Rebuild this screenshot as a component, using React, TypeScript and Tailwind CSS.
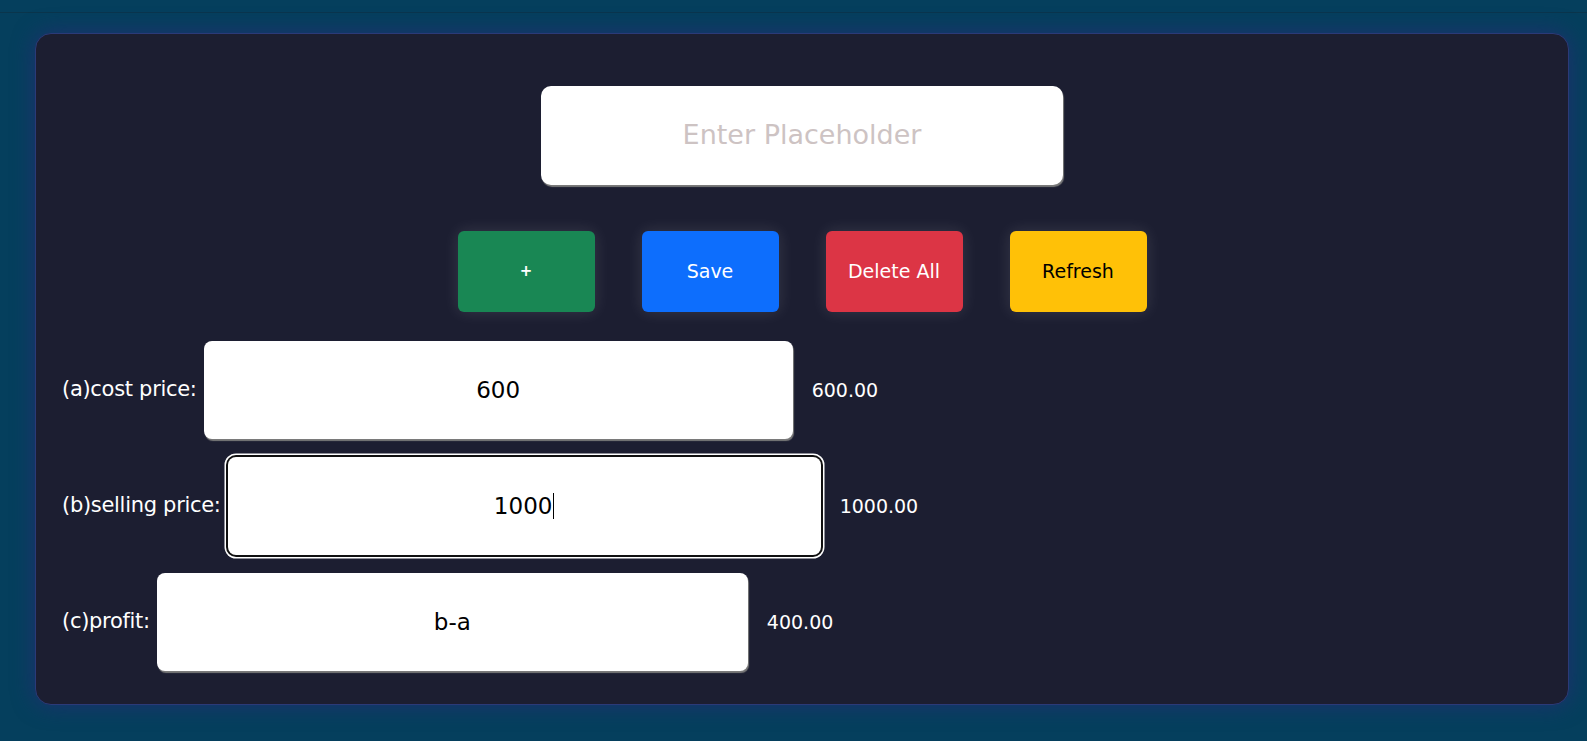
import React from "react";

const font = { fontFamily: "'DejaVu Sans', 'Open Sans', sans-serif" };

function Row({ label, value, result, focused, w }: { label: string; value: string; result: string; focused?: boolean; w: string }) {
  return (
    <div className="flex items-center">
      <span className="text-[21px] text-white whitespace-nowrap mr-[7px] tracking-[-0.3px]">{label}</span>
      <div
        className={
          "h-[98px] bg-white rounded-[8px] flex items-center justify-center text-[23px] text-black " +
          w +
          (focused
            ? " shadow-[0_0_0_2px_#101010,0_0_0_3.5px_#ffffff]"
            : " shadow-[1px_2px_1px_#7a7a7a]")
        }
      >
        <span>{value}</span>
        {focused && <span className="inline-block w-[1px] h-[26px] bg-black ml-[1px]" />}
      </div>
      <span className="text-[19px] text-white ml-[19px]">{result}</span>
    </div>
  );
}

export default function App() {
  return (
    <div className="min-h-screen w-full bg-[#053f5d] overflow-hidden" style={font}>
      <div className="h-[13px] border-b border-[#0a354c]" />
      <div className="ml-[35px] mr-[18px] mt-[20px] bg-[#1c1e31] rounded-[16px] border border-[#2b3a78] shadow-[0_0_22px_#203070] pt-[52px] pb-[33px] px-[26px]">
        <div className="flex justify-center">
          <div className="w-[522px] h-[99px] bg-white rounded-[10px] shadow-[1px_2px_1px_#7a7a7a] flex items-center justify-center text-[27px] text-[#cdc3c3]">
            Enter Placeholder
          </div>
        </div>
        <div className="flex justify-center gap-[47px] mt-[46px]">
          <button className="w-[137px] h-[81px] rounded-[6px] bg-[#198754] text-white text-[15px] font-bold shadow-[0_0_16px_rgba(255,255,255,0.12)]">+</button>
          <button className="w-[137px] h-[81px] rounded-[6px] bg-[#0d6efd] text-white text-[19px] shadow-[0_0_16px_rgba(255,255,255,0.12)]">Save</button>
          <button className="w-[137px] h-[81px] rounded-[6px] bg-[#dc3545] text-white text-[19px] shadow-[0_0_16px_rgba(255,255,255,0.12)]">Delete All</button>
          <button className="w-[137px] h-[81px] rounded-[6px] bg-[#ffc107] text-black text-[19px] shadow-[0_0_16px_rgba(255,255,255,0.12)]">Refresh</button>
        </div>
        <div className="flex flex-col gap-[18px] mt-[29px]">
          <Row label="(a)cost price:" value="600" result="600.00" w="w-[589px]" />
          <Row label="(b)selling price:" value="1000" result="1000.00" focused w="w-[593px]" />
          <Row label="(c)profit:" value="b-a" result="400.00" w="w-[591px]" />
        </div>
      </div>
    </div>
  );
}
